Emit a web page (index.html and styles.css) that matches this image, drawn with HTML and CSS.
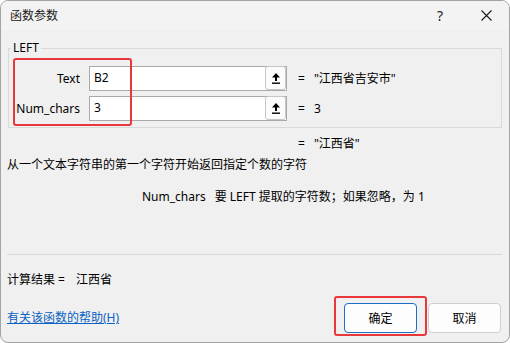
FILE: index.html
```html
<!DOCTYPE html>
<html lang="zh-CN">
<head>
<meta charset="utf-8">
<title>函数参数</title>
<link rel="stylesheet" href="styles.css">
</head>
<body>
<div class="window">
  <div class="titlebar">
    <span class="title">函数参数</span>
    <span class="help">?</span>
    <span class="close">
      <svg width="11" height="11" viewBox="0 0 11 11"><path d="M0.5 0.5 L10.5 10.5 M10.5 0.5 L0.5 10.5" stroke="#1a1a1a" stroke-width="1.1" fill="none"/></svg>
    </span>
  </div>
  <div class="body">
    <fieldset class="group">
      <legend>LEFT</legend>
      <div class="args">
        <div class="highlight"></div>
        <label class="arg-label">Text</label>
        <div class="input"><span class="input-text">B2</span><span class="ref-btn"><svg width="8" height="11" viewBox="0 0 8 11"><path d="M4 0 L8 4.5 H5 V8 H3 V4.5 H0 Z" fill="#000"/><rect x="0" y="9.5" width="8" height="1.4" fill="#000"/></svg></span></div>
        <span class="eq">=</span>
        <span class="val">"江西省吉安市"</span>
        <label class="arg-label">Num_chars</label>
        <div class="input"><span class="input-text">3</span><span class="ref-btn"><svg width="8" height="11" viewBox="0 0 8 11"><path d="M4 0 L8 4.5 H5 V8 H3 V4.5 H0 Z" fill="#000"/><rect x="0" y="9.5" width="8" height="1.4" fill="#000"/></svg></span></div>
        <span class="eq">=</span>
        <span class="val">3</span>
      </div>
    </fieldset>
    <div class="result-row"><span class="eq">=</span><span class="val">"江西省"</span></div>
    <div class="desc">从一个文本字符串的第一个字符开始返回指定个数的字符</div>
    <div class="argdesc"><span class="argname">Num_chars</span><span>要 LEFT 提取的字符数；如果忽略，为 1</span></div>
    <div class="separator"></div>
    <div class="calc"><span>计算结果</span><span class="calc-eq">=</span><span class="calc-val">江西省</span></div>
    <div class="footer">
      <a class="help-link" href="#">有关该函数的帮助(H)</a>
      <div class="buttons">
        <div class="ok-wrap"><button class="btn btn-primary">确定</button></div>
        <button class="btn">取消</button>
      </div>
    </div>
  </div>
</div>
</body>
</html>
```
FILE: styles.css
```css
* { box-sizing: border-box; }
html, body { margin: 0; padding: 0; background: #ffffff; }
body {
  width: 510px;
  height: 343px;
  font-family: "Noto Sans", "Noto Sans CJK SC", sans-serif;
  font-size: 12px;
  color: #000;
}
.window {
  width: 510px;
  height: 343px;
  border: 1px solid #a3a3a3;
  border-radius: 8px;
  overflow: hidden;
  background: #f0f0f0;
}
.titlebar {
  height: 29px;
  display: flex;
  align-items: center;
  background: #f3f3f3;
  padding-left: 9px;
}
.title {
  flex: 1;
  font-size: 12px;
  color: #1a1a1a;
  line-height: 16px;
}
.help {
  width: 14px;
  text-align: center;
  font-size: 14px;
  color: #1a1a1a;
  margin-right: 34px;
  line-height: 16px;
}
.close {
  display: flex;
  margin-right: 17px;
}
.body {
  padding: 0 7px 0 6px;
}
.group {
  margin: 10px 0 0 1px;
  padding: 0 0 6px 0;
  border: 1px solid #dadada;
  min-width: 0;
}
.group legend {
  padding: 0 2px;
  margin-left: 2px;
  line-height: 16px;
  font-size: 12px;
}
.args {
  position: relative;
  margin-top: 10px;
  display: grid;
  grid-template-columns: 71px 207px auto 1fr;
  grid-auto-rows: 25px;
  row-gap: 5px;
  align-items: center;
}
.highlight {
  position: absolute;
  left: 4px;
  top: -8px;
  width: 119px;
  height: 68px;
  border: 2px solid #e8383c;
  border-radius: 3px;
  pointer-events: none;
}
.arg-label {
  text-align: right;
  line-height: 16px;
}
.input {
  margin-left: 9px;
  height: 25px;
  width: 198px;
  border: 1px solid #a9a9a9;
  background: #fff;
  display: flex;
  align-items: stretch;
}
.input-text {
  flex: 1;
  padding-left: 4px;
  line-height: 22px;
}
.ref-btn {
  width: 21px;
  margin: -1px 0 0 0;
  height: 24px;
  border: 1px solid #c6c6c6;
  border-radius: 3px;
  background: #fbfbfb;
  display: flex;
  align-items: center;
  justify-content: center;
}
.eq {
  margin-left: 11px;
  line-height: 16px;
}
.val {
  margin-left: 9px;
  line-height: 16px;
}
.result-row {
  margin-top: 8px;
  height: 16px;
  line-height: 16px;
  display: flex;
  padding-left: 280px;
}
.desc {
  margin-top: 5px;
  height: 16px;
  line-height: 16px;
}
.argdesc {
  margin-top: 16px;
  height: 16px;
  line-height: 16px;
  padding-left: 135px;
  display: flex;
}
.argname {
  margin-right: 9px;
}
.separator {
  margin-top: 49px;
  height: 1px;
  background: #d9d9d9;
}
.calc {
  margin-top: 17px;
  height: 16px;
  line-height: 16px;
  display: flex;
}
.calc-eq {
  margin-left: 3px;
}
.calc-val {
  margin-left: 11px;
}
.footer {
  margin-top: 15px;
  height: 30px;
  display: flex;
  align-items: center;
  justify-content: space-between;
}
.help-link {
  color: #0a62c4;
  text-decoration: underline;
  line-height: 16px;
}
.buttons {
  display: flex;
  gap: 11px;
  margin-right: 1px;
}
.ok-wrap {
  position: relative;
}
.ok-wrap::after {
  content: "";
  position: absolute;
  left: -10px;
  right: -10px;
  top: -7px;
  bottom: -3px;
  border: 2px solid #e8383c;
  border-radius: 3px;
  pointer-events: none;
}
.btn {
  width: 73px;
  height: 30px;
  border: 1px solid #cfcfcf;
  border-radius: 4px;
  background: #fdfdfd;
  font-family: "Noto Sans", "Noto Sans CJK SC", sans-serif;
  font-size: 12px;
  color: #000;
  padding: 0;
  display: block;
}
.btn-primary {
  border-color: #1c6ec6;
}
```
